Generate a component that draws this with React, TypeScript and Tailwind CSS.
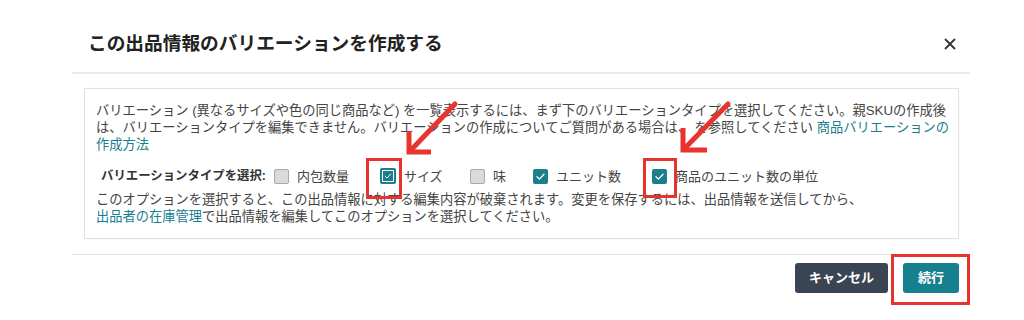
import React from 'react';

type Option = { label: string; checked: boolean; focused?: boolean; width: string };

const options: Option[] = [
  { label: '内包数量', checked: false, width: 'w-[106px]' },
  { label: 'サイズ', checked: true, focused: true, width: 'w-[90px]' },
  { label: '味', checked: false, width: 'w-[63px]' },
  { label: 'ユニット数', checked: true, width: 'w-[119px]' },
  { label: '商品のユニット数の単位', checked: true, width: '' },
];

function CheckMark() {
  return (
    <svg viewBox="0 0 15 15" className="h-[15px] w-[15px]">
      <path d="M4 7.8 L6.4 10.1 L11 5.3" fill="none" stroke="#ffffff" strokeWidth="1.3" strokeLinecap="round" strokeLinejoin="round" />
    </svg>
  );
}

function Checkbox({ checked, focused }: { checked: boolean; focused?: boolean }) {
  if (!checked) {
    return <span className="h-[15px] w-[15px] shrink-0 rounded-[2px] border border-[#a8a8a8] bg-[#dadada]" />;
  }
  if (focused) {
    return (
      <span className="flex h-[16px] w-[16px] shrink-0 items-center justify-center rounded-[2px] bg-[#1b7e8b]">
        <span className="flex h-[12px] w-[12px] items-center justify-center border border-white">
          <svg viewBox="0 0 12 12" className="h-[10px] w-[10px]">
            <path d="M2.5 6.2 L4.8 8.4 L9.2 3.8" fill="none" stroke="#ffffff" strokeWidth="1.2" strokeLinecap="round" strokeLinejoin="round" />
          </svg>
        </span>
      </span>
    );
  }
  return (
    <span className="flex h-[15px] w-[15px] shrink-0 items-center justify-center rounded-[2px] bg-[#1b7e8b]">
      <CheckMark />
    </span>
  );
}

export default function App() {
  return (
    <div className="relative h-[320px] w-[1024px] overflow-hidden bg-white font-['Liberation_Sans','Noto_Sans_CJK_JP',sans-serif] text-[#333]">
      <div className="ml-[72px] flex w-[898px] flex-col">
        <div className="flex h-[72px] items-center justify-between pl-4 pr-[14px] pt-4">
          <h1 className="text-[18.7px] font-bold leading-none text-[#222]">
            この出品情報のバリエーションを作成する
          </h1>
          <svg viewBox="0 0 12 12" className="h-[12px] w-[12px]">
            <path d="M1.5 1.5 L10.5 10.5 M10.5 1.5 L1.5 10.5" stroke="#333" strokeWidth="1.8" strokeLinecap="round" />
          </svg>
        </div>
        <div className="h-[2px] bg-[#e9e9e9]" />

        <div className="pl-[12px] pr-[11px] pt-[14px]">
          <div className="border border-[#e1e1e1] pb-[13px] pl-[11px] pr-[4px] pt-[13px] text-[13.25px] leading-[17px] text-[#444] shadow-[0_0_2px_rgba(0,0,0,0.04)]">
            <p className="whitespace-nowrap">
              バリエーション (異なるサイズや色の同じ商品など) を一覧表示するには、まず下のバリエーションタイプを選択してください。親SKUの作成後
              <br />
              は、バリエーションタイプを編集できません。バリエーションの作成についてご質問がある場合は、 を参照してください{' '}
              <span className="text-[#16808e]">
                商品バリエーションの
                <br />
                作成方法
              </span>
            </p>

            <div className="mt-[14px] flex h-[18px] items-center pl-[5px] text-[13px]">
              <span className="w-[173px] shrink-0 text-[12.4px] font-bold text-[#333]">バリエーションタイプを選択:</span>
              {options.map((o) => (
                <span key={o.label} className={`flex shrink-0 items-center gap-2 ${o.width}`}>
                  <Checkbox checked={o.checked} focused={o.focused} />
                  <span>{o.label}</span>
                </span>
              ))}
            </div>

            <p className="mt-[6px] whitespace-nowrap">
              このオプションを選択すると、この出品情報に対する編集内容が破棄されます。変更を保存するには、出品情報を送信してから、
              <br />
              <span className="text-[#16808e]">出品者の在庫管理</span>で出品情報を編集してこのオプションを選択してください。
            </p>
          </div>
        </div>

        <div className="mt-[15px] h-[1px] bg-[#e6e6e6]" />

        <div className="flex justify-end gap-[15px] pr-[11px] pt-[8px]">
          <button className="h-[30px] w-[93px] rounded-[3px] bg-[#3a4553] text-[13px] font-bold text-white">
            キャンセル
          </button>
          <button className="h-[30px] w-[56px] rounded-[3px] bg-[#17808e] text-[13px] font-bold text-white">
            続行
          </button>
        </div>
      </div>

      <svg className="pointer-events-none absolute inset-0" width="1024" height="320" viewBox="0 0 1024 320">
        <g fill="none" stroke="#e8332f" strokeWidth="5">
          <path d="M455 104 L411 150" strokeLinecap="round" />
          <path d="M409 131 L409 152 L431 152" strokeLinejoin="miter" />
          <path d="M728 104 L685 148" strokeLinecap="round" />
          <path d="M683 128 L683 150 L707 150" strokeLinejoin="miter" />
        </g>
        <g fill="none" stroke="#e5332f" strokeWidth="3">
          <rect x="367.5" y="159.5" width="33" height="38" />
          <rect x="644.5" y="159.5" width="31" height="37" />
          <rect x="892.5" y="255.5" width="76" height="48" />
        </g>
      </svg>
    </div>
  );
}
